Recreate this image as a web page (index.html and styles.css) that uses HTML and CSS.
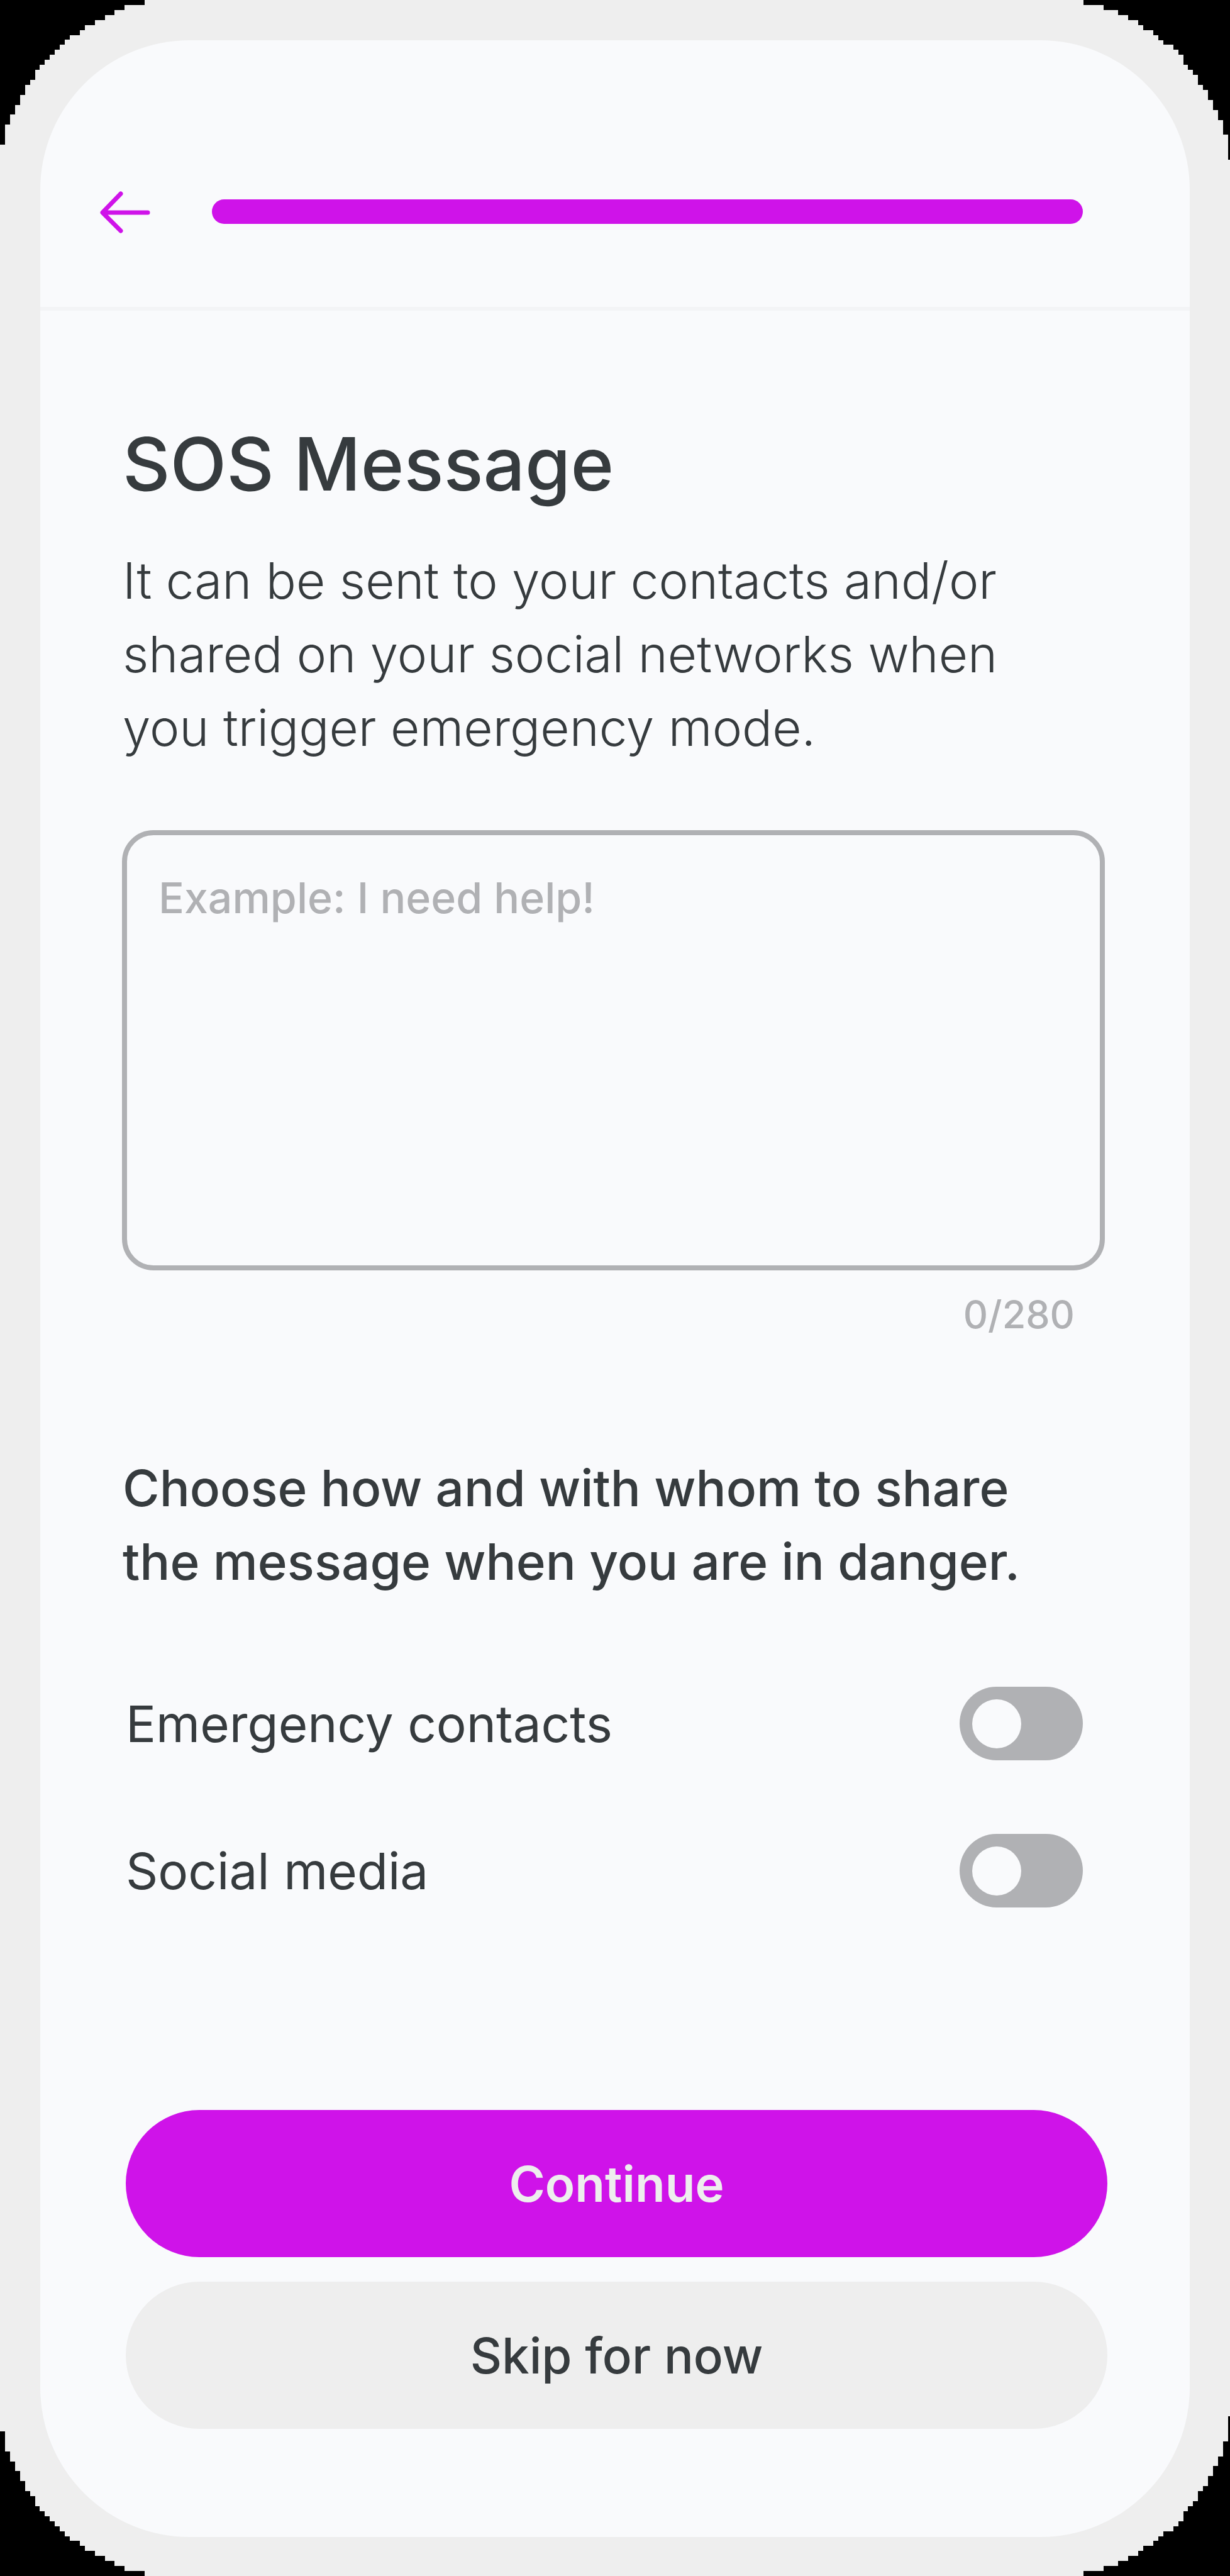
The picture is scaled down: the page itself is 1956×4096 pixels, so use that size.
FILE: index.html
```html
<!DOCTYPE html>
<html lang="en">
<head>
<meta charset="utf-8">
<title>SOS Message</title>
<meta name="viewport" content="width=device-width, initial-scale=1">
<link rel="stylesheet" href="styles.css">
</head>
<body>
<div class="device">
  <svg class="corner corner-tl" viewBox="0 0 29 29" preserveAspectRatio="none" aria-hidden="true"><path d="M0 0H29V1H25V2H23V3H21V4H19V5H17V6H16V7H14V8H13V9H12V10H11V11H10V12H9V13H8V14H7V16H6V17H5V19H4V21H3V23H2V25H1V29H0Z"/></svg>
  <svg class="corner corner-tr" viewBox="0 0 29.4 32" preserveAspectRatio="none" aria-hidden="true"><path d="M29.4 0H0V1H4V2H7V3H9V4H11V5H12V6H14V7H15V8H16V9H18V10H19V11H20V13H21V14H22V15H23V17H24V18H25V20H26V22H27V24H28V27H29V32H29.4Z"/></svg>
  <svg class="corner corner-bl" viewBox="0 0 29 29" preserveAspectRatio="none" aria-hidden="true"><path transform="matrix(1 0 0 -1 0 29)" d="M0 0H29V1H25V2H23V3H21V4H19V5H17V6H16V7H14V8H13V9H12V10H11V11H10V12H9V13H8V14H7V16H6V17H5V19H4V21H3V23H2V25H1V29H0Z"/></svg>
  <svg class="corner corner-br" viewBox="0 0 29.4 32" preserveAspectRatio="none" aria-hidden="true"><path transform="matrix(1 0 0 -1 0 32)" d="M29.4 0H0V1H4V2H7V3H9V4H11V5H12V6H14V7H15V8H16V9H18V10H19V11H20V13H21V14H22V15H23V17H24V18H25V20H26V22H27V24H28V27H29V32H29.4Z"/></svg>

  <div class="screen">
    <header class="topbar">
      <button class="back" type="button" aria-label="Back">
        <svg viewBox="0 0 80 68" aria-hidden="true"><path d="M33 5 4 35l29 29M6 35h70"/></svg>
      </button>
      <progress class="progress" value="1" max="1" aria-label="Setup progress"></progress>
    </header>

    <main class="content">
      <h1 class="title">SOS Message</h1>
      <p class="intro">It can be sent to your contacts and/or shared on your social networks when you trigger emergency mode.</p>
      <textarea class="message" maxlength="280" placeholder="Example: I need help!" aria-label="SOS message"></textarea>
      <p class="counter">0/280</p>

      <h2 class="prompt">Choose how and with whom to share the message when you are in danger.</h2>
      <div class="options">
        <div class="option">
          <label for="contacts">Emergency contacts</label>
          <input class="toggle" id="contacts" type="checkbox" role="switch">
        </div>
        <div class="option">
          <label for="social">Social media</label>
          <input class="toggle" id="social" type="checkbox" role="switch">
        </div>
      </div>

      <div class="actions">
        <button class="btn btn-primary" type="button">Continue</button>
        <button class="btn btn-secondary" type="button">Skip for now</button>
      </div>
    </main>
  </div>
</div>
</body>
</html>
```

FILE: styles.css
```css
:root {
  --accent: #cf13e9;
  --ink: #363b3e;
  --muted: #b0b1b4;
  --surface: #f9fafc;
  --frame: #eeeeee;
}

* {
  box-sizing: border-box;
}

body {
  margin: 0;
  background: #000;
  color: var(--ink);
  font-family: Inter, "Liberation Sans", sans-serif;
  font-size: 80px;
  line-height: 117px;
}

h1, h2, p {
  margin: 0;
}

button, textarea {
  font: inherit;
}

.device {
  position: relative;
  display: flex;
  min-height: 100vh;
  padding: 64px 64px 62px;
  background: var(--frame);
}

/* Stepped cut-outs at the corners of the device body */
.corner {
  position: absolute;
  fill: #000;
  shape-rendering: crispEdges;
}

.corner-tl, .corner-bl {
  left: 0;
  width: 230px;
  height: 230px;
}

.corner-tr, .corner-br {
  right: 0;
  width: 233px;
  height: 254px;
}

.corner-tl, .corner-tr {
  top: 0;
}

.corner-bl, .corner-br {
  bottom: 0;
}

.screen {
  flex: 1;
  display: flex;
  flex-direction: column;
  border-radius: 238px;
  background: var(--surface);
}

.topbar {
  display: flex;
  align-items: center;
  gap: 98px;
  padding: 253px 170px 132px 95px;
  border-bottom: 6px solid #f3f4f6;
}

.back {
  display: flex;
  align-items: center;
  width: 80px;
  height: 39px;
  padding: 0;
  border: 0;
  background: none;
}

.back svg {
  flex: none;
  width: 80px;
  height: 68px;
  fill: none;
  stroke: var(--accent);
  stroke-width: 7;
  stroke-linecap: round;
  stroke-linejoin: round;
}

.progress {
  appearance: none;
  flex: 1;
  height: 39px;
  border: 0;
  border-radius: 20px;
  overflow: hidden;
}

.progress::-webkit-progress-bar {
  background: var(--frame);
}

.progress::-webkit-progress-value {
  background: var(--accent);
}

.content {
  flex: 1;
  display: flex;
  flex-direction: column;
  padding: 174px 135px 172px 130px;
}

.title {
  padding-left: 1px;
  font-size: 117px;
  font-weight: 500;
  line-height: 140px;
}

.intro {
  max-width: 1440px;
  margin-top: 56px;
  padding-left: 1px;
  font-weight: 300;
}

.message {
  height: 700px;
  margin-top: 105px;
  padding: 50px;
  border: 8px solid var(--muted);
  border-radius: 50px;
  background: none;
  color: var(--ink);
  font-size: 68px;
  font-weight: 500;
  line-height: 98px;
  resize: none;
}

.message::placeholder {
  color: var(--muted);
  opacity: 1;
}

.counter {
  margin-top: 30px;
  padding-right: 48px;
  color: var(--muted);
  font-size: 61px;
  font-weight: 500;
  line-height: 80px;
  text-align: right;
}

.prompt {
  max-width: 1440px;
  margin-top: 177px;
  padding-left: 1px;
  font-size: 80px;
  font-weight: 500;
}

.options {
  display: flex;
  flex-direction: column;
  gap: 117px;
  margin-top: 141px;
  padding: 0 35px 0 6px;
}

.option {
  display: flex;
  align-items: center;
  justify-content: space-between;
}

.toggle {
  appearance: none;
  display: flex;
  align-items: center;
  width: 196px;
  height: 117px;
  margin: 0;
  padding: 0 20px;
  border-radius: 59px;
  background: var(--muted);
}

.toggle::before {
  content: "";
  width: 78px;
  height: 78px;
  border-radius: 50%;
  background: var(--surface);
}

.toggle:checked {
  justify-content: flex-end;
  background: var(--accent);
}

.actions {
  display: flex;
  flex-direction: column;
  gap: 39px;
  margin-top: auto;
  padding-left: 6px;
  margin-right: -4px;
}

.btn {
  height: 234px;
  border: 0;
  border-radius: 117px;
  font-size: 78px;
}

.btn-primary {
  background: var(--accent);
  color: var(--frame);
  font-weight: 600;
}

.btn-secondary {
  background: var(--frame);
  color: var(--ink);
  font-weight: 500;
}
```
